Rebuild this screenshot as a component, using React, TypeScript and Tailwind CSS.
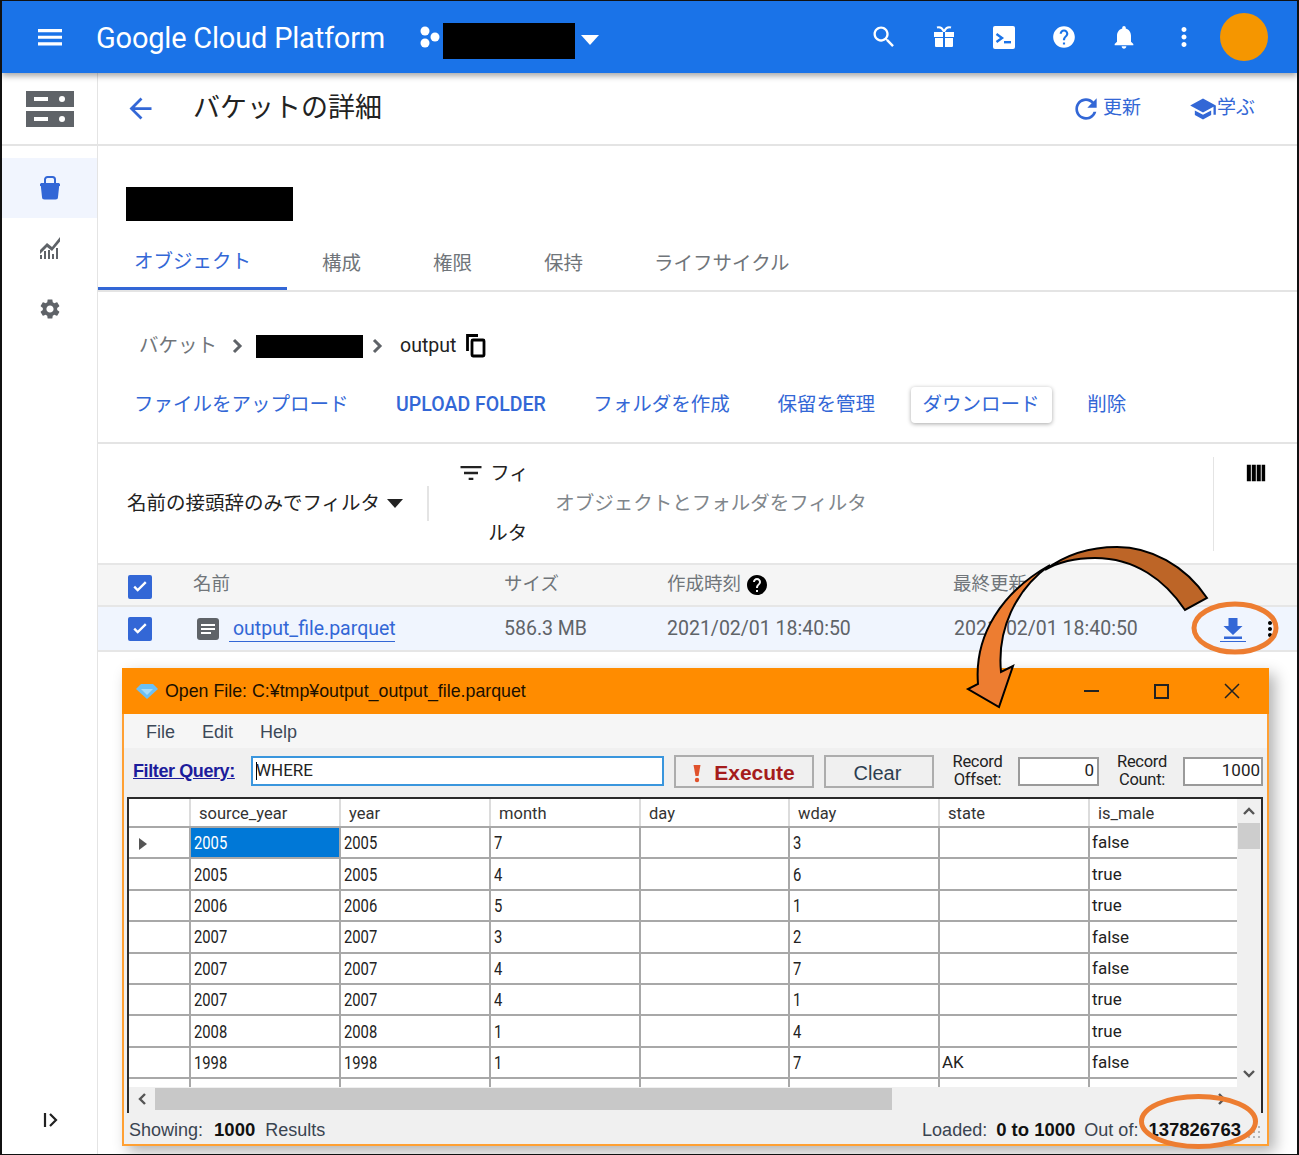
import React from "react";

const jp = "font-['Roboto','Noto_Sans_CJK_JP',sans-serif]";

function I({ d, size = 24, className = "" }: { d: string; size?: number; className?: string }) {
  return (
    <svg width={size} height={size} viewBox="0 0 24 24" fill="currentColor" className={className}>
      <path d={d} />
    </svg>
  );
}

const P = {
  menu: "M3 18h18v-2.4H3V18zm0-5h18v-2.4H3V13zm0-7.4V8h18V5.6H3z",
  search:
    "M15.5 14h-.79l-.28-.27C15.41 12.59 16 11.11 16 9.5 16 5.91 13.09 3 9.5 3S3 5.91 3 9.5 5.91 16 9.5 16c1.61 0 3.09-.59 4.23-1.57l.27.28v.79l5 4.99L20.49 19l-4.99-5zm-6 0C7.01 14 5 11.99 5 9.5S7.01 5 9.5 5 14 7.01 14 9.5 11.99 14 9.5 14z",
  help: "M12 2C6.48 2 2 6.48 2 12s4.48 10 10 10 10-4.48 10-10S17.52 2 12 2zm1 17h-2v-2h2v2zm2.07-7.75l-.9.92C13.45 12.9 13 13.5 13 15h-2v-.5c0-1.1.45-2.1 1.17-2.83l1.24-1.26c.37-.36.59-.86.59-1.41 0-1.1-.9-2-2-2s-2 .9-2 2H8c0-2.21 1.79-4 4-4s4 1.79 4 4c0 .88-.36 1.68-.93 2.25z",
  bell: "M12 22c1.1 0 2-.9 2-2h-4c0 1.1.89 2 2 2zm6-6v-5c0-3.07-1.64-5.64-4.5-6.32V4c0-.83-.67-1.5-1.5-1.5s-1.5.67-1.5 1.5v.68C7.63 5.36 6 7.92 6 11v5l-2 2v1h16v-1l-2-2z",
  dots: "M12 8c1.1 0 2-.9 2-2s-.9-2-2-2-2 .9-2 2 .9 2 2 2zm0 2c-1.1 0-2 .9-2 2s.9 2 2 2 2-.9 2-2-.9-2-2-2zm0 6c-1.1 0-2 .9-2 2s.9 2 2 2 2-.9 2-2-.9-2-2-2z",
  refresh:
    "M17.65 6.35C16.2 4.9 14.21 4 12 4c-4.42 0-7.99 3.58-7.99 8s3.57 8 7.99 8c3.73 0 6.84-2.55 7.73-6h-2.08c-.82 2.33-3.04 4-5.65 4-3.31 0-6-2.69-6-6s2.69-6 6-6c1.66 0 3.14.69 4.22 1.78L13 11h7V4l-2.35 2.35z",
  school: "M5 13.18v4L12 21l7-3.82v-4L12 17l-7-3.82zM12 3L1 9l11 6 9-4.91V17h2V9L12 3z",
  back: "M20 11H7.83l5.59-5.59L12 4l-8 8 8 8 1.41-1.41L7.83 13H20v-2z",
  filter: "M10 18h4v-2h-4v2zM3 6v2h18V6H3zm3 7h12v-2H6v2z",
  columns: "M2 3h4.4v18H2zM7.400 3h4.400v18H7.400zM12.800 3h4.400v18h-4.400zM18.200 3H22v18h-3.800z",
  gear: "M19.14 12.94c.04-.3.06-.61.06-.94 0-.32-.02-.64-.07-.94l2.03-1.58c.18-.14.23-.41.12-.61l-1.92-3.32c-.12-.22-.37-.29-.59-.22l-2.39.96c-.5-.38-1.03-.7-1.62-.94l-.36-2.54c-.04-.24-.24-.41-.48-.41h-3.84c-.24 0-.43.17-.47.41l-.36 2.54c-.59.24-1.13.57-1.62.94l-2.39-.96c-.22-.08-.47 0-.59.22L2.74 8.87c-.12.21-.08.47.12.61l2.03 1.58c-.05.3-.09.63-.09.94s.02.64.07.94l-2.03 1.58c-.18.14-.23.41-.12.61l1.92 3.32c.12.22.37.29.59.22l2.39-.96c.5.38 1.03.7 1.62.94l.36 2.54c.05.24.24.41.48.41h3.84c.24 0 .44-.17.47-.41l.36-2.54c.59-.24 1.13-.56 1.62-.94l2.39.96c.22.08.47 0 .59-.22l1.92-3.32c.12-.22.07-.47-.12-.61l-2.01-1.58zM12 15.6c-1.98 0-3.6-1.62-3.6-3.6s1.62-3.6 3.6-3.6 3.6 1.62 3.6 3.6-1.62 3.6-3.6 3.6z",
  check: "M9.5 17.2 4.8 12.5l1.8-1.8 2.9 2.9 7.9-7.900 1.800 1.800z",
};

function Gift() {
  return (
    <svg width="24" height="24" viewBox="0 0 24 24" fill="white">
      <path d="M2 7h9v5H2zM13 7h9v5h-9zM3 13h8v9H4a1 1 0 0 1-1-1zM13 13h8v8a1 1 0 0 1-1 1h-7z" />
      <path d="M5 2.500 C8 1.500 10.500 3.500 11.600 6 L12.400 6 C13.500 3.500 16 1.500 19 2.500" fill="none" stroke="white" strokeWidth="2" />
    </svg>
  );
}

function Terminal() {
  return (
    <svg width="24" height="24" viewBox="0 0 24 24">
      <rect x="1" y="1" width="22" height="23" rx="2" fill="white" />
      <path d="M4.500 9 L10 13 L4.500 17" fill="none" stroke="#1a73e8" strokeWidth="2.400" />
      <path d="M12 16h7v2.400h-7z" fill="#1a73e8" />
    </svg>
  );
}

function Check() {
  return (
    <div className="w-6 h-6 rounded-[2px] bg-[#3367d6] flex items-center justify-center text-white">
      <I d={P.check} size={22} />
    </div>
  );
}

const Redact = ({ className }: { className: string }) => <div className={`bg-black ${className}`} />;

const columns = ["source_year", "year", "month", "day", "wday", "state", "is_male"];
const widths = ["w-[150px]", "w-[150px]", "w-[150px]", "w-[149px]", "w-[150px]", "w-[150px]", "w-[148px]"];
const rows = [
  ["2005", "2005", "7", "", "3", "", "false"],
  ["2005", "2005", "4", "", "6", "", "true"],
  ["2006", "2006", "5", "", "1", "", "true"],
  ["2007", "2007", "3", "", "2", "", "false"],
  ["2007", "2007", "4", "", "7", "", "false"],
  ["2007", "2007", "4", "", "1", "", "true"],
  ["2008", "2008", "1", "", "4", "", "true"],
  ["1998", "1998", "1", "", "7", "AK", "false"],
  ["", "", "", "", "", "", ""],
];

function DataWindow() {
  return (
    <div className="absolute left-[120px] top-[667px] w-[1147px] h-[478px] flex flex-col bg-[#f0f0f0] border-x-2 border-b-2 border-[#ffa033] shadow-[6px_6px_14px_rgba(0,0,0,0.3)] font-['Liberation_Sans',sans-serif] text-[#222]">
      <div className="h-[46px] -mx-[2px] shrink-0 bg-[#ff8c00] flex items-center text-[17.800px] text-[#1a0f00]">
        <svg width="24" height="20" viewBox="0 0 24 20" className="ml-[13px] mr-[6px]">
          <path d="M6 3h12l5 5-11 10L1 8z" fill="#6cc0f5" />
          <path d="M6 8h12l-6 6z" fill="#a5dcfb" />
        </svg>
        <span>Open File: C:¥tmp¥output_output_file.parquet</span>
        <div className="ml-auto flex items-center mr-[29px] gap-[55px]">
          <div className="w-[15px] h-[2px] bg-[#222]" />
          <div className="w-[15px] h-[15px] border-2 border-[#222]" />
          <svg width="16" height="16" viewBox="0 0 16 16" stroke="#222" strokeWidth="1.500">
            <path d="M1 1 15 15M15 1 1 15" />
          </svg>
        </div>
      </div>
      <div className="h-[34px] shrink-0 bg-[#f6f6f6] flex items-center pl-[22px] gap-[27px] text-[18px] text-[#3c4858] pt-[2px]">
        <span>File</span>
        <span>Edit</span>
        <span>Help</span>
      </div>
      <div className="h-[46px] shrink-0 flex items-center pl-[9px]">
        <span className="w-[118px] text-[18px] font-bold underline text-[#1c1c9c] -tracking-[0.4px] whitespace-nowrap">Filter Query:</span>
        <div className="w-[413px] h-[30px] border-2 border-[#3a96dd] bg-white flex items-center pl-[3px] text-[17px] font-['Roboto',sans-serif] text-[#222]">
          <div className="w-px h-[18px] bg-black -mr-px" />
          <span>WHERE</span>
        </div>
        <div className="ml-[10px] w-[140px] h-[33px] border-2 border-[#adadad] flex items-center justify-center gap-[13px] pt-[3px]">
          <svg width="8" height="20" viewBox="0 0 8 20" fill="#e0522c">
            <path d="M0.500 2h7L5.500 13h-3z" />
            <circle cx="4" cy="17" r="2.200" />
          </svg>
          <span className="text-[21px] font-bold text-[#a51c1c]">Execute</span>
        </div>
        <div className="ml-[10px] w-[110px] h-[33px] border-2 border-[#adadad] flex items-center justify-center pt-[3px] pr-[3px] text-[20px] text-[#2c3e50]">
          Clear
        </div>
        <div className="ml-[17px] w-[53px] text-[16.500px] leading-[18px] text-center font-['Roboto',sans-serif] -tracking-[0.3px]">
          <div>Record</div>
          <div>Offset:</div>
        </div>
        <div className="ml-[14px] w-[81px] h-[29px] border-2 border-[#9a9a9a] bg-white flex items-center justify-end pr-[3px] text-[17px] font-['Roboto',sans-serif]">
          0
        </div>
        <div className="ml-[16px] w-[54px] text-[16.500px] leading-[18px] text-center font-['Roboto',sans-serif] -tracking-[0.3px]">
          <div>Record</div>
          <div>Count:</div>
        </div>
        <div className="ml-[14px] w-[80px] h-[29px] border-2 border-[#9a9a9a] bg-white flex items-center justify-end pr-[1px] text-[17px] font-['Roboto',sans-serif]">
          1000
        </div>
      </div>
      <div className="h-[316px] shrink-0 mt-[3px] mx-[3px] w-[1136px] border-x-2 border-t-2 border-[#2a2a2a] flex flex-col">
        <div className="h-[288px] flex overflow-hidden">
          <div className="w-[1108px] bg-white overflow-hidden">
            <div className="flex h-[29px] border-b-2 border-[#a8a8a8] text-[16.500px] text-[#333]">
              <div className="w-[60px]" />
              {columns.map((c, i) => (
                <div key={c} className={`${widths[i]} border-l-2 border-[#dcdcdc] pl-[8px] pt-[3px] flex items-center font-['Roboto',sans-serif]`}>
                  {c}
                </div>
              ))}
            </div>
            {rows.map((r, ri) => (
              <div key={ri} className="flex h-[31.400px] border-b-2 border-[#a8a8a8] text-[18px] text-[#222]">
                <div className="w-[60px] flex items-center pl-[9px] border-b border-white">
                  {ri === 0 && (
                    <svg width="10" height="14" viewBox="0 0 10 14" fill="#555" className="mt-[3px]">
                      <path d="M1 1 9 7 1 13z" />
                    </svg>
                  )}
                </div>
                {r.map((v, ci) => (
                  <div
                    key={ci}
                    className={`${widths[ci]} border-l-2 border-[#a8a8a8] pl-[2px] flex items-center font-['Roboto',sans-serif] ${
                      ri === 0 && ci === 0 ? "bg-[#0078d7] text-white" : ""
                    }`}
                  >
                    <span className={ci === 6 || ci === 5 ? "text-[17px] mt-px" : "inline-block origin-left scale-x-[0.82] ml-px"}>{v}</span>
                  </div>
                ))}
              </div>
            ))}
          </div>
          <div className="w-[24px] flex flex-col items-center bg-[#f0f0f0]">
            <svg width="14" height="24" viewBox="0 0 14 24" fill="none" stroke="#555" strokeWidth="2.400">
              <path d="M2 15 7 10 12 15" />
            </svg>
            <div className="w-[22px] h-[26px] bg-[#cdcdcd]" />
            <svg width="14" height="24" viewBox="0 0 14 24" fill="none" stroke="#555" strokeWidth="2.400" className="mt-auto mb-[1px]">
              <path d="M2 9 7 14 12 9" />
            </svg>
          </div>
        </div>
        <div className="h-[24px] flex items-center bg-[#f0f0f0]">
          <div className="w-[26px] flex justify-center">
            <svg width="12" height="14" viewBox="0 0 12 14" fill="none" stroke="#555" strokeWidth="2.400">
              <path d="M9 2 4 7 9 12" />
            </svg>
          </div>
          <div className="w-[737px] h-[22px] bg-[#c8c8c8]" />
          <div className="ml-auto mr-[33px]">
            <svg width="12" height="14" viewBox="0 0 12 14" fill="none" stroke="#555" strokeWidth="2.400">
              <path d="M3 2 8 7 3 12" />
            </svg>
          </div>
        </div>
      </div>
      <div className="flex-1 flex items-center pl-[5px] pr-[5px] pt-[3px] text-[18px] text-[#3a4450]">
        <span>Showing:</span>
        <b className="ml-[11px] text-[#111] text-[18.500px]">1000</b>
        <span className="ml-[10px]">Results</span>
        <span className="ml-auto">Loaded:</span>
        <b className="ml-[9px] text-[#111] text-[18.500px]">0 to 1000</b>
        <span className="ml-[9px]">Out of:</span>
        <b className="ml-[10px] text-[#111] text-[18.500px]">137826763</b>
        <svg width="14" height="14" viewBox="0 0 14 14" fill="#b5b5b5" className="ml-[7px] mt-[6px]">
          <rect x="10" y="0" width="2" height="2" />
          <rect x="5" y="5" width="2" height="2" />
          <rect x="10" y="5" width="2" height="2" />
          <rect x="0" y="10" width="2" height="2" />
          <rect x="5" y="10" width="2" height="2" />
          <rect x="10" y="10" width="2" height="2" />
        </svg>
      </div>
    </div>
  );
}

function Annotations() {
  return (
    <svg width="1299" height="1155" viewBox="0 0 1299 1155" className="absolute -left-[2px] -top-[1px] pointer-events-none">
      <path
        d="M1207 598 C1185 565 1150 547 1117 547 C1090 547 1065 555 1045 570 C1060 561 1075 558 1095 558 C1135 558 1165 580 1185 610 Z"
        fill="#bd6527"
        stroke="#000"
        strokeWidth="2"
      />
      <path
        d="M1050 565 C1002 592 974 635 978 684 L968 689 L999 707 L1013 666 L1001 672 C997 630 1015 590 1050 565 Z"
        fill="#ed7d31"
        stroke="#000"
        strokeWidth="2"
      />
      <ellipse cx="1235" cy="628" rx="41" ry="24" fill="none" stroke="#ed7d31" strokeWidth="5" />
      <ellipse cx="1198.500" cy="1121.500" rx="57" ry="25" fill="none" stroke="#ed7d31" strokeWidth="5" />
    </svg>
  );
}

export default function App() {
  return (
    <div className={`relative w-[1299px] h-[1155px] overflow-hidden bg-white border-x-2 border-y-[1px] border-[#111] ${jp}`}>
      <header className="h-[72px] bg-[#1a73e8] flex items-center text-white shadow-[0_3px_6px_rgba(0,0,0,0.35)] relative z-10">
        <div className="ml-[32px] w-[32px] flex justify-center">
          <I d={P.menu} size={33} />
        </div>
        <span className="ml-[30px] mt-[3px] text-[29px] font-['Roboto',sans-serif] -tracking-[0.2px]">Google Cloud Platform</span>
        <svg width="24" height="24" viewBox="0 0 24 24" fill="white" className="ml-[33px]">
          <circle cx="7" cy="6" r="4.500" />
          <circle cx="7" cy="18" r="4.500" />
          <circle cx="17" cy="12" r="4.500" />
        </svg>
        <Redact className="ml-[1px] mt-[8px] w-[132px] h-[36px]" />
        <svg width="20" height="12" viewBox="0 0 20 12" fill="white" className="ml-[5px] mt-[5px]">
          <path d="M1 1h18L10 11z" />
        </svg>
        <div className="ml-auto flex items-center gap-[36px] mr-[29px]">
          <I d={P.search} size={28} className="-mx-[2px]" />
          <Gift />
          <Terminal />
          <I d={P.help} size={26} className="-mx-[1px]" />
          <I d={P.bell} size={28} className="-mx-[2px]" />
          <I d={P.dots} size={30} className="-mx-[3px]" />
          <div className="w-[48px] h-[48px] -ml-[12px] rounded-full bg-[#f59600]" />
        </div>
      </header>

      <div className="flex h-[1082px]">
        <aside className="w-[96px] shrink-0 border-r border-[#e4e4e4] flex flex-col items-stretch">
          <div className="h-[73px] border-b-2 border-[#e4e4e4] flex items-center justify-center">
            <svg width="48" height="36" viewBox="0 0 48 36">
              <path d="M0 0h48v16H0zM0 20h48v16H0z" fill="#5f6368" />
              <path d="M8 6h14v4H8zM8 26h14v4H8z" fill="white" />
              <circle cx="36" cy="8" r="3" fill="white" />
              <circle cx="36" cy="28" r="3" fill="white" />
            </svg>
          </div>
          <div className="mt-[12px] h-[60px] bg-[#f1f5fe] flex items-center justify-center">
            <svg width="24" height="26" viewBox="0 0 24 26" fill="#3367d6">
              <path d="M2.500 8h19l-1.500 14a2.500 2.500 0 0 1-2.500 2.500H6.500a2.500 2.500 0 0 1-2.500-2.500z" />
              <path d="M7 9V4.500a2.500 2.500 0 0 1 2.500-2.500h5a2.500 2.500 0 0 1 2.500 2.500V9" fill="none" stroke="#3367d6" strokeWidth="2" />
              <path d="M2 10h20" stroke="#3367d6" strokeWidth="2" />
            </svg>
          </div>
          <div className="h-[60px] flex items-center justify-center">
            <svg width="24" height="24" viewBox="0 0 24 24" fill="#5f6368">
              <path d="M2 14 9 7 14 11 22 1v4.500l-8 9.500-5-4-7 7z" />
              <path d="M2 19h2v4H2zM6 15h2v8H6zM10 14h2v9h-2zM14 18h2v5h-2zM18 12h2v11h-2z" />
            </svg>
          </div>
          <div className="h-[60px] flex items-center justify-center text-[#5f6368] pt-[2px]">
            <I d={P.gear} />
          </div>
          <div className="mt-auto mb-[27px] flex justify-center pl-[3px]">
            <svg width="16" height="16" viewBox="0 0 16 16" fill="none" stroke="#222" strokeWidth="2.200">
              <path d="M2 1v14M7 2l6 6-6 6" />
            </svg>
          </div>
        </aside>

        <main className="flex-1 min-w-0">
          <div className="h-[73px] border-b-2 border-[#e4e4e4] flex items-center pl-[26px] pr-[42px]">
            <I d={P.back} size={33} className="text-[#3367d6]" />
            <h1 className="ml-[36px] text-[27px] font-normal text-[#222]">バケットの詳細</h1>
            <div className="ml-auto flex items-center text-[#3367d6] text-[19px]">
              <I d={P.refresh} size={32} className="-ml-[3px]" />
              <span className="ml-[1px]">更新</span>
              <I d={P.school} size={28} className="ml-[48px]" />
              <span>学ぶ</span>
            </div>
          </div>

          <div className="h-[146px] border-b-2 border-[#e4e4e4] flex flex-col">
            <Redact className="ml-[28px] mt-[41px] w-[167px] h-[34px]" />
            <div className="mt-auto flex text-[19.500px] text-[#70757a]">
              <div className="px-[36px] h-[56px] flex items-center pt-[3px] border-b-[3px] border-[#3367d6] text-[#3367d6]">オブジェクト</div>
              <div className="px-[36px] flex items-center pt-[3px] -ml-px">構成</div>
              <div className="px-[36px] flex items-center pt-[3px]">権限</div>
              <div className="px-[36px] flex items-center pt-[3px]">保持</div>
              <div className="px-[36px] flex items-center pt-[3px] -ml-px">ライフサイクル</div>
            </div>
          </div>

          <div className="h-[152px] border-b-2 border-[#e4e4e4] flex flex-col text-[19.500px]">
            <div className="mt-[42px] h-[24px] flex items-center pl-[41px] text-[#70757a]">
              <span>バケット</span>
              <svg width="12" height="16" viewBox="0 0 12 16" fill="none" stroke="#5f6368" strokeWidth="3" className="ml-[15px]">
                <path d="M2 2l6 6-6 6" />
              </svg>
              <Redact className="ml-[12px] w-[107px] h-[23px]" />
              <svg width="12" height="16" viewBox="0 0 12 16" fill="none" stroke="#5f6368" strokeWidth="3" className="ml-[9px]">
                <path d="M2 2l6 6-6 6" />
              </svg>
              <span className="ml-[16px] text-[#222]">output</span>
              <svg width="20" height="24" viewBox="0 0 20 24" fill="none" stroke="#000" strokeWidth="2.800" className="ml-[10px]">
                <path d="M1.500 17V1.500H12" />
                <rect x="6" y="6" width="12" height="16" rx="1" />
              </svg>
            </div>
            <div className="mt-[29px] h-[36px] flex items-center pl-[36px] gap-[47.600px] text-[#3367d6]">
              <span>ファイルをアップロード</span>
              <span className="font-medium">UPLOAD FOLDER</span>
              <span>フォルダを作成</span>
              <span>保留を管理</span>
              <span className="-mx-[12px] px-[12px] h-[36px] flex items-center rounded-[4px] bg-white shadow-[0_1px_4px_rgba(0,0,0,0.35)]">ダウンロード</span>
              <span>削除</span>
            </div>
          </div>

          <div className="h-[119px] flex items-center text-[19.500px] text-[#222]">
            <span className="ml-[29px]">名前の接頭辞のみでフィルタ</span>
            <svg width="16" height="9" viewBox="0 0 16 9" fill="#222" className="ml-[7px]">
              <path d="M0 0h16L8 9z" />
            </svg>
            <div className="ml-[24px] w-[2px] h-[35px] bg-[#e4e4e4]" />
            <div className="ml-[30px] w-[70px] flex flex-col h-[90px] justify-between shrink-0">
              <div className="flex items-center">
                <I d={P.filter} size={28} className="-ml-[2px]" />
                <span className="ml-[5px]">フィ</span>
              </div>
              <span className="ml-[29px]">ルタ</span>
            </div>
            <span className="ml-[26px] text-[#80868b]">オブジェクトとフォルダをフィルタ</span>
            <div className="ml-auto w-[84px] h-[94px] border-l border-[#e4e4e4] flex justify-center">
              <I d={P.columns} size={22} className="mt-[5px] text-black ml-[1px]" />
            </div>
          </div>

          <div className="h-[44px] bg-[#f5f5f5] border-y-2 border-[#e6e6e6] flex items-center text-[18.500px] text-[#70757a]">
            <div className="ml-[30px] mt-[3px]">
              <Check />
            </div>
            <span className="ml-[41px] w-[311px]">名前</span>
            <span className="w-[163px]">サイズ</span>
            <span>作成時刻</span>
            <I d={P.help} size={24} className="ml-[4px] text-black" />
            <span className="ml-[184px]">最終更新</span>
          </div>

          <div className="h-[45px] bg-[#f0f5fe] border-b-2 border-[#e6e6e6] flex items-center text-[19.500px] text-[#5f6368]">
            <div className="ml-[30px]">
              <Check />
            </div>
            <div className="ml-[45px] w-[22px] h-[22px] rounded-[3px] bg-[#5f6368] flex flex-col items-center justify-center gap-[2px]">
              <div className="w-[14px] h-[2px] bg-white" />
              <div className="w-[14px] h-[2px] bg-white" />
              <div className="w-[10px] h-[2px] bg-white mr-[4px]" />
            </div>
            <a className="ml-[10px] w-[166px] pl-[4px] leading-[24px] border-b border-[#3367d6] text-[#3367d6] mt-[2px] whitespace-nowrap">output_file.parquet</a>
            <span className="ml-[109px] w-[163px]">586.3 MB</span>
            <span className="w-[287px]">2021/02/01 18:40:50</span>
            <span className="w-[264px]">2021/02/01 18:40:50</span>
            <svg width="30" height="30" viewBox="0 0 30 30" fill="#3367d6">
              <path d="M10.500 4h9v8h5L15 21 5.500 12h5zM6 22.500h18v2.500H6zM2 27h26v1H2z" />
            </svg>
            <I d={P.dots} size={24} className="text-black ml-[10px]" />
          </div>
        </main>
      </div>

      <DataWindow />
      <Annotations />
    </div>
  );
}
